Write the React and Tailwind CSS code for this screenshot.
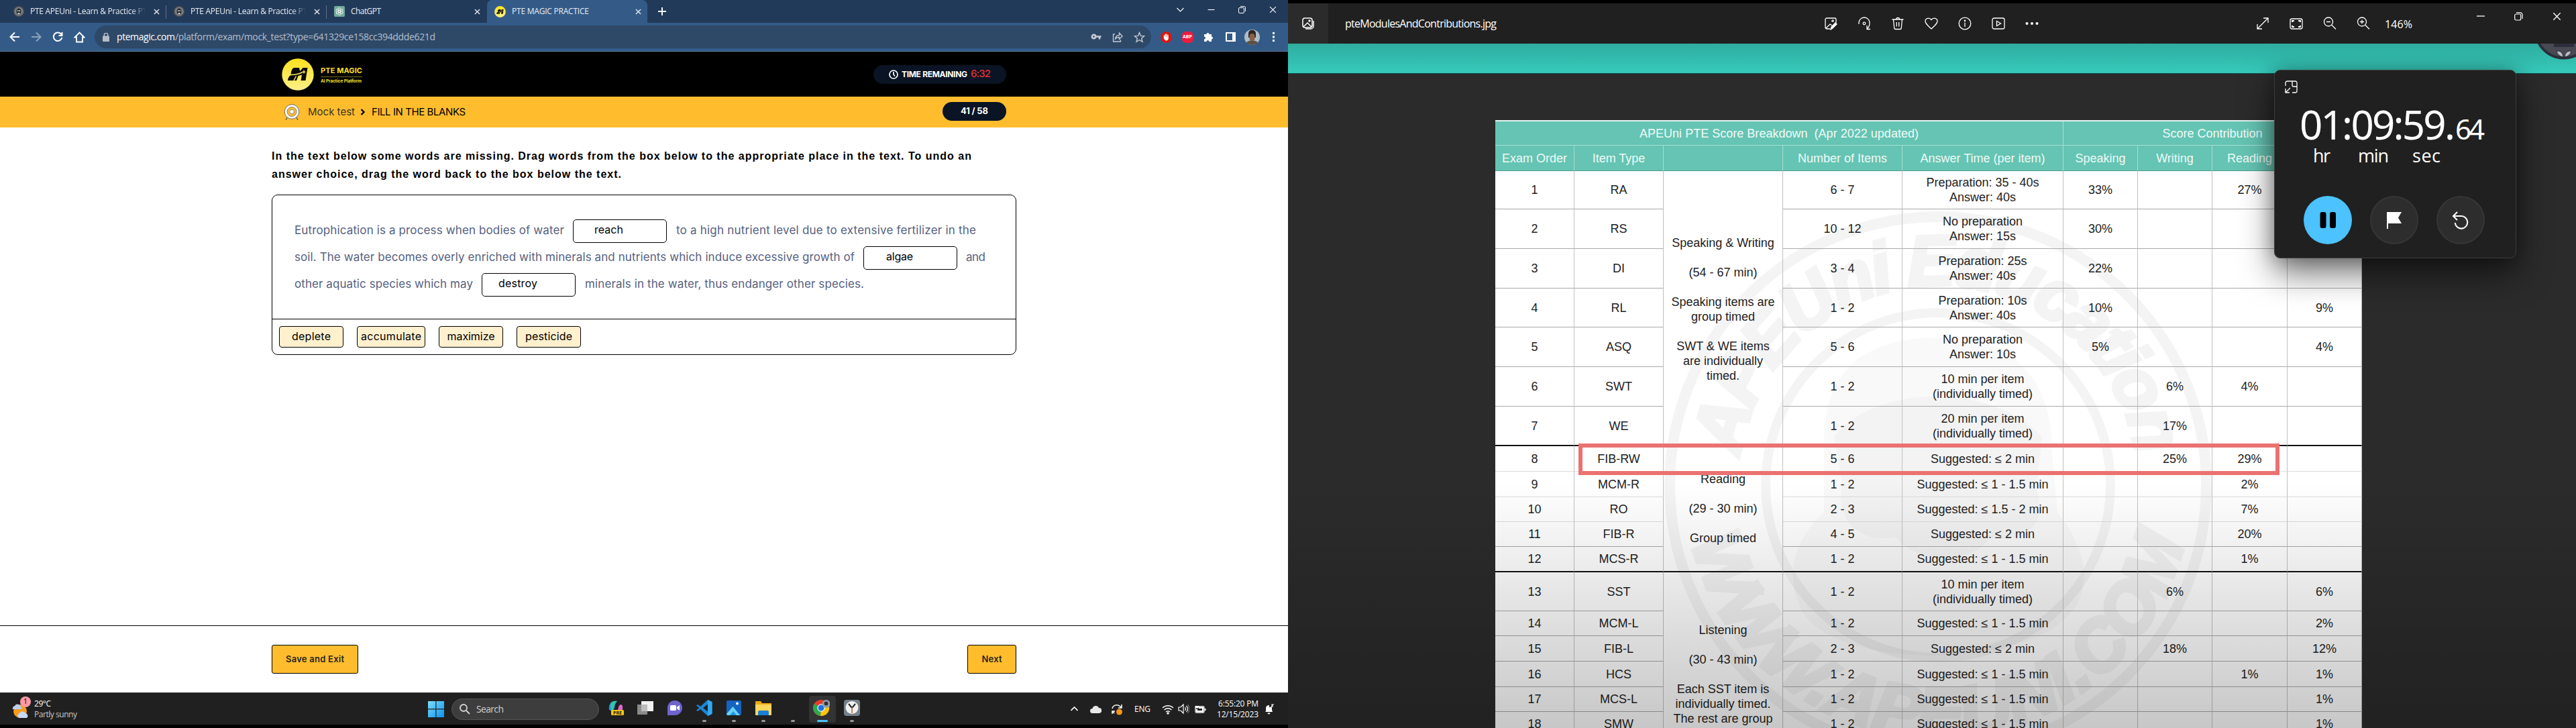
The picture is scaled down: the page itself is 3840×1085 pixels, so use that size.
import React, { useLayoutEffect, useRef, useState } from "react";

/* Single-line text tracked so that it spans a given width. */
function T({ w, className = "", children }) {
  const ref = useRef(null);
  const [ls, setLs] = useState(0);
  useLayoutEffect(() => {
    if (!w) return;
    const n = String(children).length;
    const natural = ref.current.getBoundingClientRect().width;
    if (n > 1) setLs((w - natural) / (n - 1));
  }, [w, children]);
  return (
    <span
      ref={ref}
      className={"inline-block shrink-0 whitespace-pre " + className}
      style={ls ? { letterSpacing: ls + "px", marginRight: -ls + "px" } : undefined}
    >
      {children}
    </span>
  );
}

function Svg({ s = 20, vb = "0 0 20 20", sw = 1.3, className = "", children }) {
  return (
    <svg width={s} height={s} viewBox={vb} fill="none" stroke="currentColor" strokeWidth={sw} className={"shrink-0 " + className}>
      {children}
    </svg>
  );
}

const Cross = ({ s = 10, sw = 1.6 }) => (
  <Svg s={s} vb="0 0 10 10" sw={sw}><path d="M1 1l8 8M9 1L1 9" /></Svg>
);

function ApeIcon() {
  return (
    <Svg s={16} vb="0 0 16 16">
      <circle cx="8" cy="8" r="7.5" fill="#777c80" stroke="#454a50" />
      <path d="M4.5 8c0-6 7-6 7 0l-1 4H5.500z" fill="#24282c" stroke="none" />
      <path d="M6 6h1.500v2H6zM8.500 6H10v2H8.500zM6.500 10h3v2h-3z" fill="#c9c9c9" stroke="none" />
    </Svg>
  );
}

function MagicLogo({ s }) {
  return (
    <svg width={s} height={s} viewBox="0 0 48 48" className="shrink-0">
      <defs>
        <linearGradient id="lg" x1="0" y1="0" x2="0" y2="1">
          <stop offset="0" stopColor="#fde21c" /><stop offset="1" stopColor="#fcf08a" />
        </linearGradient>
      </defs>
      <circle cx="24" cy="24" r="23.700" fill="url(#lg)" />
      <path d="M18.500 14h7.500l1.200 5L31.500 14H38.500L35.500 33H28.500L30 24.500 24.500 26 22 33H9C9.500 28 12 25 16 24H13.500C14 19 15.500 14.500 18.500 14z" fill="#0a0a0a" />
      <path d="M13 24.500C20 24.500 26 23.500 31 20.500M18 33l3.500-6.500" stroke="#fdea50" strokeWidth="1.500" fill="none" />
      <path d="M33 17l.9 2.300 2.300.9-2.300.9-.9 2.300-.9-2.300-2.300-.9 2.300-.9z" fill="#fdea50" />
    </svg>
  );
}

function Tab({ icon, title, w, fade }) {
  return (
    <div className="flex h-[34px] w-[239px] shrink-0 items-center pl-[11px] text-[12px] text-[#e8edf3]">
      {icon}
      <div className={"ml-[9px] w-[172px] overflow-hidden " + (fade ? "[mask-image:linear-gradient(90deg,#000_88%,transparent)]" : "")}>
        <T w={w}>{title}</T>
      </div>
      <div className="ml-[12px] text-[#dfe5ec]"><Cross s={9} /></div>
    </div>
  );
}

function Browser() {
  return (
    <div className="font-['Open_Sans','Noto_Sans',sans-serif]">
      <div className="flex h-[34px] bg-[#223a59] pl-[9px]">
        <Tab icon={<ApeIcon />} title="PTE APEUni - Learn & Practice PT" w={174} fade />
        <div className="mt-2 -ml-px h-5 w-px bg-[#5c7089]" />
        <Tab icon={<ApeIcon />} title="PTE APEUni - Learn & Practice PT" w={174} fade />
        <div className="mt-2 -ml-px h-5 w-px bg-[#5c7089]" />
        <Tab
          icon={
            <Svg s={16} vb="0 0 16 16" sw={0.9} className="rounded-[2px] bg-[#74aa9c] text-white">
              {[0, 60, 120, 180, 240, 300].map((a) => (
                <path key={a} transform={`rotate(${a} 8 8)`} d="M8 6.200l1.700 1V4.500a2 2 0 0 0-3.700-.8" />
              ))}
            </Svg>
          }
          title="ChatGPT"
          w={45}
        />
        <div className="h-[34px] rounded-t-[8px] bg-[#345b88]"><Tab icon={<MagicLogo s={17} />} title="PTE MAGIC PRACTICE" w={115} /></div>
        <div className="ml-[15px] flex items-center text-white"><Svg s={14} vb="0 0 14 14" sw={1.9}><path d="M7 1v12M1 7h12" /></Svg></div>
        <div className="ml-auto flex items-center pb-[6px] text-white">
          <div className="flex w-[46px] justify-center"><Svg s={11} vb="0 0 11 11" sw={1.1}><path d="M.5 3l5 5 5-5" /></Svg></div>
          <div className="flex w-[46px] justify-center"><Svg s={11} vb="0 0 11 11" sw={1.1}><path d="M.5 5.500h10" /></Svg></div>
          <div className="flex w-[46px] justify-center"><Svg s={11} vb="0 0 11 11" sw={1}><rect x="0.500" y="2.500" width="8" height="8" rx="1.500" /><path d="M3 .5h5.500a2 2 0 0 1 2 2V8" /></Svg></div>
          <div className="flex w-[46px] justify-center"><Cross s={11} sw={1} /></div>
        </div>
      </div>
      <div className="flex h-[43px] items-center border-b border-[#5d7ca1] bg-[#345b88] pl-[6px] text-white">
        <div className="flex w-8 justify-center"><Svg s={16} vb="0 0 16 16" sw={2}><path d="M15 8H2M8 1.500L1.500 8 8 14.500" /></Svg></div>
        <div className="flex w-8 justify-center text-[#8da2bc]"><Svg s={16} vb="0 0 16 16" sw={2}><path d="M1 8h13M8 1.500L14.500 8 8 14.500" /></Svg></div>
        <div className="flex w-8 justify-center"><Svg s={16} vb="0 0 16 16" sw={2}><path d="M13.500 4.500A6.300 6.300 0 1 0 14.300 9M14.500 1v5h-5" /></Svg></div>
        <div className="flex w-8 justify-center"><Svg s={17} vb="0 0 17 17" sw={1.9}><path d="M4 15.500V8.500H1.500l7-7 7 7H13v7z" /></Svg></div>
        <div className="ml-[7px] flex h-[34px] w-[1575px] items-center rounded-full bg-[#2e4868] pl-[12px] text-[14px]">
          <svg width="10" height="13" viewBox="0 0 10 13" className="shrink-0"><rect y="4.500" width="10" height="8.500" rx="1" fill="#b6bcc5" /><path d="M2.300 5V3a2.700 2.700 0 0 1 5.400 0v2" fill="none" stroke="#b6bcc5" strokeWidth="1.500" /></svg>
          <T w={87} className="ml-[11px] pb-px">ptemagic.com</T>
          <T w={388} className="pb-px text-[#b5bfcb]">/platform/exam/mock_test?type=641329ce158cc394ddde621d</T>
          <div className="mr-[2px] ml-auto flex text-[#c5cbd3]">
            <div className="flex w-8 justify-center"><Svg s={16} vb="0 0 16 16" sw={2.600}><circle cx="4.500" cy="7.500" r="2.600" /><path d="M7 7.500h8.500M13 7.500v4" /></Svg></div>
            <div className="flex w-8 justify-center"><Svg s={16} vb="0 0 16 16" sw={1.300}><path d="M4 4H1.500v11h11v-2.500M4.500 11c.5-4 3-5.500 6-5.500V2l4.500 5-4.500 4.500V8.500C8 8.500 6 9 4.500 11z" /></Svg></div>
            <div className="flex w-8 justify-center"><Svg s={17} vb="0 0 17 17" sw={1.400}><path d="M8.500 1.500l2 4.900 5.200.4-4 3.400 1.300 5.100-4.500-2.800L4 15.300l1.300-5.100-4-3.400 5.200-.4z" /></Svg></div>
          </div>
        </div>
        <div className="ml-[6px] flex items-center">
          <div className="flex w-8 justify-center"><Svg s={17} vb="0 0 17 17"><path d="M5 .5h7l4.500 4.500v7L12 16.500H5L.5 12V5z" fill="#e0140f" stroke="none" /><path d="M5.500 8.500V5.500M7.300 8V3.500M9.200 8V3.500M11 8V5" strokeWidth="1.400" /><path d="M4.800 8h7v2c0 2-1.500 3.500-3 3.500S5.500 12 4.800 10z" fill="#fff" stroke="none" /></Svg></div>
          <div className="flex w-8 justify-center">
            <div className="flex size-[17px] items-center justify-center rounded-[6px] bg-[#ee1b3d] text-[7px] font-bold">ABP</div>
          </div>
          <div className="flex w-8 justify-center"><Svg s={16} vb="0 0 16 16"><path d="M1 4h3.500a2 2 0 1 1 4 0H12v3.500a2 2 0 1 1 0 4V15H8.500a2 2 0 1 0-4 0H1v-3.500a2 2 0 1 0 0-4z" fill="#fff" stroke="none" /></Svg></div>
          <div className="flex w-8 justify-center"><div className="h-[14px] w-[15px] border-2 border-r-[5px] border-white" /></div>
          <div className="flex w-8 justify-center"><Svg s={23} vb="0 0 23 23"><g stroke="none"><circle cx="11.500" cy="11.500" r="11.500" fill="#aebdca" /><path d="M3 20c2-5 15-5 17 0-4 4-13 4-17 0z" fill="#5b5245" /><path d="M6 6c0-7 11-7 11 0v6H6z" fill="#2c2723" /><rect x="7.500" y="6" width="8" height="11" rx="4" fill="#8a6048" /></g></Svg></div>
          <div className="flex w-8 justify-center"><Svg s={16} vb="0 0 16 16"><g fill="#fff" stroke="none"><rect x="7" y="1" width="3" height="3" /><rect x="7" y="6.500" width="3" height="3" /><rect x="7" y="12" width="3" height="3" /></g></Svg></div>
        </div>
      </div>
    </div>
  );
}

const Blank = ({ pad, w, children }) => (
  <div className="h-[35px] w-[140px] shrink-0 rounded-[5px] border border-black text-[16px] leading-[28px] text-black" style={{ paddingLeft: pad }}>
    <T w={w}>{children}</T>
  </div>
);

const Chip = ({ w, children }) => (
  <div className="flex h-8 min-w-[96px] justify-center rounded-[4px] border border-black bg-[#fff0ce] px-[5px] text-[16px] leading-[28px] text-black">
    <T w={w}>{children}</T>
  </div>
);

const Sunny = () => (
  <svg width="28" height="28" viewBox="0 0 28 28">
    <circle cx="12" cy="16" r="10" fill="#f79a1d" />
    <path d="M1 13a4 4 0 0 1 3-5 5 5 0 0 1 9 1 3 3 0 0 1 1 4z" fill="#b9cff2" />
    <path d="M10 26a4 4 0 0 1 1-7 5 5 0 0 1 9 0 4 4 0 0 1 2 7z" fill="#c5d8f7" />
  </svg>
);

function Taskbar() {
  const dot = <div className="h-[3px] w-[6px] rounded-full bg-[#9a9a9a]" />;
  const apps = [
    [
      <svg width="24" height="24" viewBox="0 0 24 24"><path d="M2 15C1 8 4 2 10 2h4l-3 5c-1 6-2 9-6 9z" fill="#2c8fe8" /><path d="M5 17c3 0 4-4 5-9l1-4 3-2c-6-1-9 1-10 6z" fill="#35c6a0" /><path d="M22 9c1 7-2 11-7 12h-3l3-5c1-6 2-9 5-9z" fill="#e566c8" /><rect x="5" y="15" width="19" height="8" rx="1.500" fill="#ffc61a" /><text x="14.500" y="21.600" textAnchor="middle" fontSize="7" fontWeight="bold" fill="#222">PRE</text></svg>,
      null,
    ],
    [<svg width="24" height="24" viewBox="0 0 24 24"><rect x="0" y="7" width="15" height="15" fill="#8b8b8b" /><rect x="6" y="2" width="18" height="15" fill="#f1f1f1" /><rect x="6" y="7" width="9" height="10" fill="#bcbcbc" /></svg>, null],
    [<svg width="24" height="24" viewBox="0 0 24 24"><path d="M1 12A11 11 0 1 1 12 23H1z" fill="#6f63cf" /><rect x="5" y="8" width="9" height="8" rx="1.500" fill="#fff" /><path d="M15 11l4-3v8l-4-3z" fill="#fff" /></svg>, null],
    [<svg width="24" height="24" viewBox="0 0 24 24"><path d="M17 0l6.500 3v18L17 24 6 14l-4 3-2-1.500L4.500 12 0 8.500 2 7l4 3z" fill="#1b87d6" /><path d="M17 6.500v11L10 12z" fill="#202020" /><path d="M17 0l6.500 3v18L17 24z" fill="#33a9f2" /></svg>, dot],
    [<svg width="22" height="22" viewBox="0 0 22 22"><rect width="22" height="22" rx="2" fill="#1564c0" /><path d="M0 20L9.500 9 20 22H2a2 2 0 0 1-2-2z" fill="#67d4f7" /><path d="M5 22l5-6 5 6z" fill="#2193e6" /><circle cx="16" cy="4.500" r="2" fill="#fff" /></svg>, dot],
    [<svg width="24" height="23" viewBox="0 0 24 23"><path d="M0 2a1 1 0 0 1 1-1h7l2 3h13a1 1 0 0 1 1 1v16H0z" fill="#f0a615" /><path d="M0 6h24v15a1 1 0 0 1-1 1H1a1 1 0 0 1-1-1z" fill="#ffd75c" /><path d="M4 22v-5a2 2 0 0 1 2-2h12a2 2 0 0 1 2 2v5z" fill="#1b7fd4" /></svg>, dot],
    [null, dot],
    [
      <svg width="26" height="26" viewBox="0 0 26 26" className="mr-1"><circle cx="13" cy="13" r="12" fill="#e33b2e" /><path d="M13 13L2.600 7A12 12 0 0 0 12 25z" fill="#2da94f" /><path d="M13 13l-1 12A12 12 0 0 0 24.500 9H13z" fill="#fdc60b" /><circle cx="13" cy="13" r="5.700" fill="#fff" /><circle cx="13" cy="13" r="4.500" fill="#1a73e8" /><circle cx="20.500" cy="7" r="6" fill="#8fa0af" /><circle cx="20.500" cy="6.500" r="3" fill="#3d302a" /></svg>,
      <div className="h-[3px] w-4 rounded-full bg-[#4cc2ff]" />,
    ],
    [<svg width="24" height="24" viewBox="0 0 24 24"><rect width="24" height="24" rx="4" fill="#76818c" /><circle cx="12" cy="11.500" r="9.500" fill="#f1f1f1" /><path d="M12 12L7 6M12 12l5-6" stroke="#222" strokeWidth="2" /><path d="M12 11v9" stroke="#d8502b" strokeWidth="1.500" /></svg>, dot],
  ];
  return (
    <div className="h-[53px] bg-black font-['Open_Sans','Noto_Sans',sans-serif]">
      <div className="flex h-[48px] items-center border-t border-[#3a3a3a] bg-[#202020] text-white">
        <div className="relative ml-[18px] pt-[2px]">
          <Sunny />
          <div className="absolute -top-[4px] left-[12px] flex size-4 items-center justify-center rounded-full bg-[#ff99a4] text-[11px] text-black">1</div>
        </div>
        <div className="ml-[5px] flex w-[70px] flex-col items-start text-[12px] leading-4">
          <T w={25}>29°C</T>
          <T w={64} className="text-[#c8c8c8]">Partly sunny</T>
        </div>
        <svg width="24" height="24" viewBox="0 0 24 24" className="ml-[517px] shrink-0">
          <defs><linearGradient id="win" x1="0" y1="0" x2="1" y2="1"><stop offset="0" stopColor="#7fdcfb" /><stop offset="1" stopColor="#0a93ee" /></linearGradient></defs>
          <path d="M0 0h11.300v11.300H0zM12.500 0H24v11.300H12.500zM0 12.500h11.300V24H0zM12.500 12.500H24V24H12.500z" fill="url(#win)" />
        </svg>
        <div className="ml-[11px] flex h-8 w-[220px] items-center rounded-full border border-[#545454] bg-[#3d3d3d] pl-[10px] text-[14px] text-[#d0d0d0]">
          <Svg s={17} vb="0 0 17 17" sw={1.900}><circle cx="7" cy="7" r="5" /><path d="M11 11l5 5" /></Svg>
          <T w={41} className="ml-[9px]">Search</T>
        </div>
        <div className="ml-[3px] flex">
          {apps.map(([icon, mark], i) => (
            <div key={i} className={"flex h-10 w-10 flex-col items-center mx-[2px] rounded " + (i === 7 ? "bg-[#333333]" : "")}>
              <div className="flex h-10 items-center pt-[1px]">{icon}</div>
              <div className="h-[4px] shrink-0">{mark}</div>
            </div>
          ))}
        </div>
        <div className="ml-[293px] flex items-center">
          <div className="flex w-8 justify-center"><Svg s={11} vb="0 0 11 11" sw={1.700}><path d="M.5 8l5-5 5 5" /></Svg></div>
          <div className="flex w-8 justify-center"><svg width="17" height="12" viewBox="0 0 17 12"><path d="M3.500 12a3.500 3.500 0 0 1 0-7A5 5 0 0 1 13 4a4 4 0 0 1 .5 8z" fill="#e8e8e8" /></svg></div>
          <div className="flex w-8 justify-center"><Svg s={18} vb="0 0 18 18" sw={1.500}><path d="M2 8a7 7 0 0 1 12-3l2 2M16 2v5h-5M2 16v-4h4M2 12l3 3" /><circle cx="12.500" cy="13" r="4.500" fill="#f7941d" stroke="none" /></Svg></div>
        </div>
        <T w={24} className="ml-[10px] text-[12px]">ENG</T>
        <Svg s={18} vb="0 0 18 18" sw={1.400} className="ml-[17px]"><path d="M1 7a11.300 11.300 0 0 1 16 0M3.500 10a8 8 0 0 1 11 0M6 13a4.500 4.500 0 0 1 6 0" /><circle cx="9" cy="15" r="1" fill="#fff" /></Svg>
        <Svg s={17} vb="0 0 17 17" sw={1.200} className="ml-[6px]"><path d="M1 6v5h3l4 4V2L4 6zM10.500 6q2 2.500 0 5M12.500 4q4 4.500 0 9" /><path d="M14.500 2q5 6.500 0 13" stroke="#777" /></Svg>
        <Svg s={18} vb="0 0 18 18" sw={1.300} className="ml-[7px]"><rect x="2" y="5" width="13" height="9" rx="1.500" /><path d="M7 7h6v5H4v-3M16.500 8v3" strokeWidth="2" /><path d="M3 1v3M6 1v3M1.500 4h6v2l-3 2-3-2z" fill="#fff" stroke="none" /></Svg>
        <div className="ml-[14px] flex w-[64px] flex-col items-end text-[12px] leading-4">
          <T w={60}>6:55:20 PM</T>
          <T w={62}>12/15/2023</T>
        </div>
        <div className="ml-[8px]"><Svg s={16} vb="0 0 16 16"><path d="M3 11V6a4.500 4.500 0 0 1 5-4v3h4v4l1 3H2zM5.500 13.500h4a2 2 0 0 1-4 0z" fill="#fff" stroke="none" /><path d="M11 1h3l-3 3h3M8 6h3l-3 3.500h3" stroke="#fff" strokeWidth="1.100" /></Svg></div>
      </div>
    </div>
  );
}

function PteWindow() {
  return (
    <div className="flex h-[1085px] w-[1920px] shrink-0 flex-col bg-white font-['Inter',sans-serif]">
      <Browser />
      <div className="flex h-[67px] shrink-0 items-center bg-black pr-[420px] pl-[420px]">
        <MagicLogo s={48} />
        <div className="ml-[10px] flex w-[62px] flex-col pt-[1px] text-[#f5e033]">
          <T w={62} className="self-start text-[11px] leading-[15px] font-bold">PTE MAGIC</T>
          <div className="mt-px mb-[3px] h-px bg-[#77701f]" />
          <T w={61} className="self-start text-[6.500px] leading-[7px] font-bold">AI Practice Platform</T>
        </div>
        <div className="ml-auto flex h-7 w-[198px] items-center rounded-full bg-[#0b1424] pl-[23px] text-[12px] font-bold text-white">
          <Svg s={14} vb="0 0 14 14" sw={1.700}><circle cx="7" cy="7" r="6" /><path d="M7 3v4l2 2.500" /></Svg>
          <T w={98} className="ml-[5px]">TIME REMAINING</T>
          <T w={30} className="ml-[5px] text-[15px] font-medium text-[#e0302f]">6:32</T>
        </div>
      </div>
      <div className="flex h-[46px] shrink-0 items-center bg-[#ffbd2e] pr-[420px] pl-[423px] text-[15px] text-black">
        <Svg s={24} vb="0 0 24 24"><path d="M5 20l-2 4M19 20l2 4" stroke="#555" /><circle cx="12" cy="11.500" r="10.800" fill="#fff" stroke="#666" strokeWidth="1" /><circle cx="12" cy="11.500" r="7" fill="#ffbd2e" stroke="#666" strokeWidth=".8" /><circle cx="12" cy="11.500" r="3.400" fill="#fff" stroke="#666" strokeWidth=".8" /></Svg>
        <T w={70} className="ml-[12px] text-[#3a3320]">Mock test</T>
        <Svg s={10} vb="0 0 10 10" sw={2.300} className="mr-[8px] ml-[7px]"><path d="M2.500 1l4 4-4 4" /></Svg>
        <T w={140}>FILL IN THE BLANKS</T>
        <div className="mb-[2px] ml-auto flex h-7 w-[95px] items-center justify-center rounded-full bg-[#0b1424] text-[13px] font-bold text-white"><T w={41}>41 / 58</T></div>
      </div>

      <div className="flex grow flex-col px-[405px] pt-[29px]">
        <div className="flex flex-col items-start font-['Liberation_Sans',Arial,sans-serif] text-[16px] leading-[27px] font-bold text-black">
          <T w={1043}>In the text below some words are missing. Drag words from the box below to the appropriate place in the text. To undo an</T>
          <T w={521}>answer choice, drag the word back to the box below the text.</T>
        </div>
        <div className="mt-[17px] h-[239px] rounded-[9px] border border-black text-[17px] text-[#566180]">
          <div className="h-[185px] border-b border-black pt-[33px] pl-[33px]">
            <div className="flex h-10 items-center">
              <T w={402}>Eutrophication is a process when bodies of water</T>
              <div className="w-[13px]" />
              <Blank pad={31} w={43}>reach</Blank>
              <T w={447} className="ml-[14px]">to a high nutrient level due to extensive fertilizer in the</T>
            </div>
            <div className="flex h-10 items-center">
              <T w={835}>soil. The water becomes overly enriched with minerals and nutrients which induce excessive growth of</T>
              <div className="w-[13px]" />
              <Blank pad={33} w={40}>algae</Blank>
              <T w={29} className="ml-[13px]">and</T>
            </div>
            <div className="flex h-10 items-center">
              <T w={266}>other aquatic species which may</T>
              <div className="w-[13px]" />
              <Blank pad={24} w={58}>destroy</Blank>
              <T w={416} className="ml-[14px]">minerals in the water, thus endanger other species.</T>
            </div>
          </div>
          <div className="flex gap-5 pt-[10px] pl-[10px]">
            <Chip w={58}>deplete</Chip>
            <Chip w={90}>accumulate</Chip>
            <Chip w={71}>maximize</Chip>
            <Chip w={70}>pesticide</Chip>
          </div>
        </div>
      </div>
      <div className="flex h-[100px] shrink-0 justify-between border-t border-black px-[405px] pt-[28px] text-[13px] font-semibold text-[#27251c]">
        <div className="flex h-[43px] w-[129px] items-center justify-center rounded-[3px] border border-black bg-[#ffbd2e]"><T w={87}>Save and Exit</T></div>
        <div className="flex h-[43px] w-[73px] items-center justify-center rounded-[3px] border border-black bg-[#ffbd2e]"><T w={30}>Next</T></div>
      </div>
      <Taskbar />
    </div>
  );
}

/* order, type, items, time, speaking, writing, reading, listening */
const rows = [
  ["1", "RA", "6 - 7", "Preparation: 35 - 40s\nAnswer: 40s", "33%", "", "27%", ""],
  ["2", "RS", "10 - 12", "No preparation\nAnswer: 15s", "30%", "", "", ""],
  ["3", "DI", "3 - 4", "Preparation: 25s\nAnswer: 40s", "22%", "", "", ""],
  ["4", "RL", "1 - 2", "Preparation: 10s\nAnswer: 40s", "10%", "", "", "9%"],
  ["5", "ASQ", "5 - 6", "No preparation\nAnswer: 10s", "5%", "", "", "4%"],
  ["6", "SWT", "1 - 2", "10 min per item\n(individually timed)", "", "6%", "4%", ""],
  ["7", "WE", "1 - 2", "20 min per item\n(individually timed)", "", "17%", "", ""],
  ["8", "FIB-RW", "5 - 6", "Suggested: ≤ 2 min", "", "25%", "29%", ""],
  ["9", "MCM-R", "1 - 2", "Suggested: ≤ 1 - 1.5 min", "", "", "2%", ""],
  ["10", "RO", "2 - 3", "Suggested: ≤ 1.5 - 2 min", "", "", "7%", ""],
  ["11", "FIB-R", "4 - 5", "Suggested: ≤ 2 min", "", "", "20%", ""],
  ["12", "MCS-R", "1 - 2", "Suggested: ≤ 1 - 1.5 min", "", "", "1%", ""],
  ["13", "SST", "1 - 2", "10 min per item\n(individually timed)", "", "6%", "", "6%"],
  ["14", "MCM-L", "1 - 2", "Suggested: ≤ 1 - 1.5 min", "", "", "", "2%"],
  ["15", "FIB-L", "2 - 3", "Suggested: ≤ 2 min", "", "18%", "", "12%"],
  ["16", "HCS", "1 - 2", "Suggested: ≤ 1 - 1.5 min", "", "", "1%", "1%"],
  ["17", "MCS-L", "1 - 2", "Suggested: ≤ 1 - 1.5 min", "", "", "", "1%"],
  ["18", "SMW", "1 - 2", "Suggested: ≤ 1 - 1.5 min", "", "", "", "1%"],
];

const groups = {
  0: ["row-span-7 border-b-2 border-b-[#111] pt-1", "Speaking & Writing\n\n(54 - 67 min)\n\nSpeaking items are\ngroup timed\n\nSWT & WE items\nare individually\ntimed."],
  7: ["row-span-5 border-b-2 border-b-[#111]", "Reading\n\n(29 - 30 min)\n\nGroup timed"],
  12: ["row-span-6 pt-[81px]", "Listening\n\n(30 - 43 min)\n\nEach SST item is\nindividually timed.\nThe rest are group\ntimed."],
};

const cell = "flex items-center justify-center text-center whitespace-pre border-r border-r-[#c0c0c0] ";
const head = "flex items-center justify-center whitespace-pre border-r border-b border-[#a9ddd3] bg-[#65c4b3] text-[#f0faf8] ";

function rule(i) {
  if (i === 6 || i === 11) return "border-b-2 border-b-[#111] ";
  return i > 6 && i < 10 ? "border-b border-b-[#dcdcdc] " : "border-b border-b-[#aaaaaa] ";
}

function Watermark() {
  return (
    <svg width="1292" height="906" viewBox="0 0 1292 906" className="pointer-events-none absolute top-0 left-0">
      <defs>
        <path id="arcTop" d="M 362 542 A 298 298 0 0 1 958 542" />
        <path id="arcBottom" d="M 284 542 A 376 376 0 0 0 1036 542" />
      </defs>
      <g fill="none" stroke="#000" strokeOpacity=".045">
        <circle cx="660" cy="542" r="400" strokeWidth="16" />
        <circle cx="660" cy="542" r="257" strokeWidth="14" />
      </g>
      <g opacity=".04" fill="#000" stroke="#000" strokeWidth="6" fontFamily="Liberation Sans, Arial, sans-serif" fontWeight="bold" fontStyle="italic" fontSize="106">
        <text textAnchor="middle"><textPath href="#arcTop" startOffset="50%" textLength="850">APEUni Education</textPath></text>
        <text textAnchor="middle"><textPath href="#arcBottom" startOffset="50%" textLength="1010">WWW.APEUNI.COM</textPath></text>
      </g>
      <g fill="#000" fillOpacity=".022">
        <path d="M490 480C490 360 560 322 665 322s165 60 165 170l8 90c40 50 55 110 20 150-60 80-340 90-400 0-30-60-10-110 32-150z" />
        <path d="M505 470c60-80 240-80 310 0l-8 80c20 50-20 80-70 70-20 40-110 40-140 0-60 10-90-30-80-80z" />
      </g>
    </svg>
  );
}

function ScoreTable() {
  return (
    <div className="relative mt-[69px] ml-[309px] h-[906px] w-[1292px] overflow-hidden border-t-2 border-[#e6f5f2] bg-white font-['Liberation_Sans',Arial,sans-serif] text-[18px] leading-[22px] text-[#222]">
      <Watermark />
      <div className="relative grid grid-cols-[118px_133px_178px_178px_240px_111px_111px_112px_111px] grid-rows-[36px_38px_57px_59px_59px_58px_59px_59px_59px_38px_38px_37px_37px_38px_58px_37px_38px_38px_37px_37px]">
        <div className={head + "col-span-5"}><T w={416}>APEUni PTE Score Breakdown  (Apr 2022 updated)</T></div>
        <div className={head + "col-span-4"}>Score Contribution</div>
        {["Exam Order", "Item Type", "", "Number of Items", "Answer Time (per item)", "Speaking", "Writing", "Reading", ""].map((h, i) => (
          <div key={i} className={head + "border-b-[#4d9d90]"}>{h}</div>
        ))}
        {rows.map((r, i) => {
          const line = rule(i);
          return (
            <React.Fragment key={i}>
              {r.slice(0, 2).map((v, j) => <div key={j} className={cell + line}>{v}</div>)}
              {groups[i] && <div className={cell + groups[i][0]}>{groups[i][1]}</div>}
              {r.slice(2).map((v, j) => <div key={j} className={cell + line}>{v}</div>)}
            </React.Fragment>
          );
        })}
      </div>
      <div className="absolute top-[480px] left-[124px] h-[47px] w-[1045px] border-[6px] border-[#ea7270]" />
    </div>
  );
}

function TimerCard() {
  return (
    <div className="absolute top-[104px] left-[1470px] h-[281px] w-[361px] rounded-[9px] border border-[#3d3d3d] bg-[#202020] text-white shadow-[0_22px_50px_rgba(0,0,0,0.55),0_0_26px_rgba(0,0,0,0.25)]">
      <Svg s={19} vb="0 0 19 19" sw={1.300} className="mt-[15px] ml-[15px]"><path d="M1 8V3.500A2.500 2.500 0 0 1 3.500 1h12A2.500 2.500 0 0 1 18 3.500v12a2.500 2.500 0 0 1-2.500 2.500H11M11 1v6a2 2 0 0 0 2 2h5M8 11l-7 7M1 12v6h6" /></Svg>
      <div className="mt-[6px] flex h-[80px] items-baseline pl-[37px] font-['Noto_Sans',sans-serif]">
        <T w={232} className="text-[60px] leading-[80px]">01:09:59.</T>
        <T w={44} className="text-[42px] leading-[60px]">64</T>
      </div>
      <div className="-mt-[13px] flex h-[40px] items-center pl-[57px] font-['Open_Sans',sans-serif] text-[27px]">
        <T w={26}>hr</T>
        <T w={46} className="ml-[41px]">min</T>
        <T w={42} className="ml-[35px]">sec</T>
      </div>
      <div className="mt-[40px] flex gap-[27px] pl-[43px]">
        <div className="flex size-[72px] items-center justify-center rounded-full bg-[#4cc2ff]"><Svg s={24} vb="0 0 24 24"><g fill="#000" stroke="none"><rect x="0.500" width="9" height="24" rx="3" /><rect x="15" width="9" height="24" rx="3" /></g></Svg></div>
        <div className="flex size-[72px] items-center justify-center rounded-full border-2 border-[#363636] bg-[#2d2d2d]"><Svg s={26} vb="0 0 26 26" sw={2}><path d="M3 26V1" /><path d="M3 1h21l-5 8.500 5 8.500H3z" fill="#fff" stroke="none" /></Svg></div>
        <div className="flex size-[72px] items-center justify-center rounded-full border-2 border-[#363636] bg-[#2d2d2d]"><Svg s={27} vb="0 0 27 27" sw={2.100}><path d="M8 1L2 7l6 6M2 7h12a9.300 9.300 0 1 1-9.300 10" /></Svg></div>
      </div>
    </div>
  );
}

const Tool = ({ children }) => <div className="flex w-[50px] justify-center">{children}</div>;

function PhotosWindow() {
  return (
    <div className="relative h-[1085px] w-[1920px] shrink-0 overflow-hidden border-t-[5px] border-black bg-[#2b2b2b] text-white">
      <div className="flex h-[60px] items-center bg-[#202020] font-['Open_Sans','Noto_Sans',sans-serif]">
        <div className="flex h-full w-[60px] items-center justify-center bg-[#2b2b2b]">
          <Svg s={18} vb="0 0 18 18" sw={1.500}><rect x="1" y="1" width="14" height="14" rx="3" /><path d="M2 14l6-6 6 6M17 5v8a4 4 0 0 1-4 4H5" /><circle cx="11" cy="5" r="1" /></Svg>
        </div>
        <T w={226} className="ml-[25px] text-[16px]">pteModulesAndContributions.jpg</T>
        <div className="ml-[473px] flex">
          <Tool><Svg><path d="M9 18H4a2 2 0 0 1-2-2V4a2 2 0 0 1 2-2h12a2 2 0 0 1 2 2v5M3 17l6-6 3 2" /><circle cx="13" cy="6" r="1.200" /><path d="M10 19l1-4 6-6 2 2-6 6z" fill="#fff" /></Svg></Tool>
          <Tool><Svg><path d="M2 11V9a8 8 0 0 1 16 0c0 4-1 7-4 9M14 13v5.500h5" /><circle cx="10" cy="10" r="1.800" /></Svg></Tool>
          <Tool><Svg><path d="M1.500 4h17M7.500 4a2.500 2.500 0 0 1 5 0M3.500 4l1.200 12.500a2 2 0 0 0 2 2h6.600a2 2 0 0 0 2-2L16.500 4M8.300 8v6.500M11.700 8v6.500" /></Svg></Tool>
          <Tool><Svg><path d="M10 18C4 12.500 1 10 1 6.500 1 2 7 .5 10 4.500 13 .5 19 2 19 6.500c0 3.500-3 6-9 11.500z" /></Svg></Tool>
          <Tool><Svg><circle cx="10" cy="10" r="8.800" /><path d="M10 8.500V15" /><circle cx="10" cy="5.800" r=".7" fill="#fff" /></Svg></Tool>
          <Tool><Svg><rect x="1" y="2" width="18" height="16" rx="2.500" /><path d="M7.500 6.500l6 3.500-6 3.500z" /></Svg></Tool>
          <Tool><Svg><g fill="#fff" stroke="none"><circle cx="2.500" cy="10" r="2" /><circle cx="10" cy="10" r="2" /><circle cx="17.500" cy="10" r="2" /></g></Svg></Tool>
        </div>
        <div className="ml-[294px] flex">
          <Tool><Svg><path d="M2 18L18 2M11 2h7v7M2 11v7h7" /></Svg></Tool>
          <Tool><Svg><rect x="1" y="3" width="18" height="15" rx="2.500" /><path d="M4 8V6h3M13 6h3v2M16 13v2h-3M7 15H4v-2" strokeWidth="2" /></Svg></Tool>
          <Tool><Svg><circle cx="8" cy="7.500" r="6.500" /><path d="M13 12.500l6 6M5 7.500h6" /></Svg></Tool>
          <Tool><Svg><circle cx="8" cy="7.500" r="6.500" /><path d="M13 12.500l6 6M5 7.500h6M8 4.500v6" /></Svg></Tool>
        </div>
        <T w={41} className="ml-[7px] pt-[2px] text-[16px]">146%</T>
        <div className="mb-[22px] ml-auto flex">
          <div className="flex w-[57px] justify-center"><Svg s={12} vb="0 0 12 12"><path d="M0 6h12" /></Svg></div>
          <div className="flex w-[57px] justify-center"><Svg s={13} vb="0 0 13 13" sw={1.200}><rect x="0.700" y="3" width="9" height="9" rx="2" /><path d="M3 .8h6a3 3 0 0 1 3 3V10" /></Svg></div>
          <div className="flex w-[57px] justify-center"><Cross s={13} sw={1} /></div>
        </div>
      </div>
      <div className="relative h-[45px] overflow-hidden border-b border-[#0f4a46] bg-linear-to-b from-[#2fada0] to-[#36cabb]">
        <svg width="90" height="90" viewBox="0 0 90 90" className="absolute -top-[66px] left-[1857px]">
          <circle cx="45" cy="45" r="42.500" fill="#474953" stroke="#2b2d3b" strokeWidth="4" />
          <path d="M30 62h30v9H30z" fill="#2c2e3b" />
          <path d="M34 77q9-1 10 9-8-1-10-9zM56 77q-9-1-10 9 8-1 10-9z" fill="#b9bac4" stroke="#2b2d3b" />
        </svg>
      </div>
      <ScoreTable />
      <div className="pointer-events-none absolute bottom-0 left-0 h-[365px] w-full bg-linear-to-b from-transparent to-[rgba(0,0,0,0.22)]" />
      <div className="absolute inset-0 -top-[5px]"><TimerCard /></div>
    </div>
  );
}

export default function App() {
  return (
    <div className="flex h-[1085px] w-[3840px] overflow-hidden bg-black">
      <PteWindow />
      <PhotosWindow />
    </div>
  );
}
